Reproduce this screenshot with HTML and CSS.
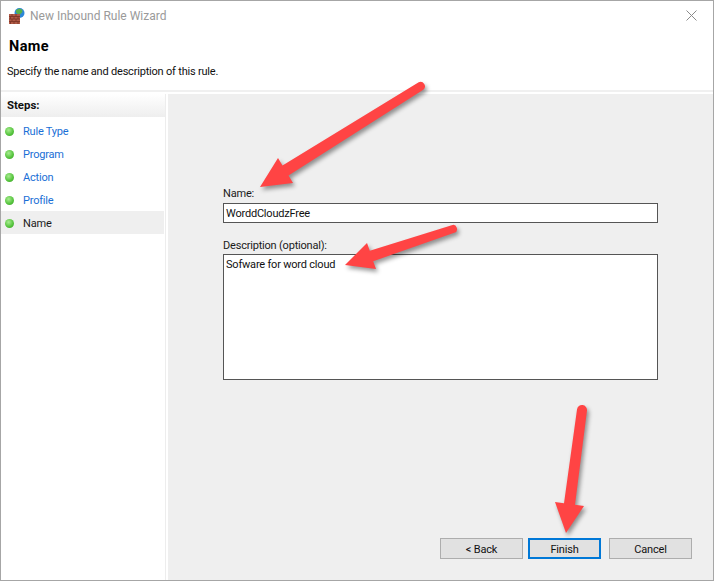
FILE: index.html
```html
<!DOCTYPE html>
<html lang="en">
<head>
<meta charset="utf-8">
<title>New Inbound Rule Wizard</title>
<link rel="stylesheet" href="styles.css">
</head>
<body>
<div class="window">
  <div class="titlebar">
    <svg class="app-icon" viewBox="0 0 16 16" width="16" height="16" aria-hidden="true">
      <circle cx="10.5" cy="5" r="5" fill="#2c86d8"/>
      <path d="M7 2.2 L10 .6 L13 1.6 L13.5 4 L11 6.5 L8.5 6 L6.8 4Z" fill="#58b04a"/>
      <rect x="0" y="6" width="11" height="10" fill="#b05a46"/>
      <path d="M0 8.5H11M0 11H11M0 13.5H11M3 6V8.5M7 6V8.5M1.5 8.5V11M5 8.5V11M9 8.5V11M3 11V13.5M7 11V13.5M1.5 13.5V16M5 13.5V16M9 13.5V16" stroke="#7a3225" stroke-width=".8" fill="none"/>
    </svg>
    <span class="title">New Inbound Rule Wizard</span>
    <svg class="close" viewBox="0 0 11 11" width="11" height="11" aria-hidden="true">
      <path d="M.5 .5L10.5 10.5M10.5 .5L.5 10.5" stroke="#8a8a8a" stroke-width="1" fill="none"/>
    </svg>
  </div>
  <div class="header">
    <h1 class="heading">Name</h1>
    <p class="sub">Specify the name and description of this rule.</p>
  </div>
  <div class="body">
    <aside class="steps">
      <div class="steps-head">Steps:</div>
      <ul class="step-list">
        <li class="step"><span class="dot"></span><span class="link">Rule Type</span></li>
        <li class="step"><span class="dot"></span><span class="link">Program</span></li>
        <li class="step"><span class="dot"></span><span class="link">Action</span></li>
        <li class="step"><span class="dot"></span><span class="link">Profile</span></li>
        <li class="step current"><span class="dot"></span><span>Name</span></li>
      </ul>
    </aside>
    <main class="content">
      <form class="form">
        <label class="label" for="n">Name:</label>
        <div class="field" id="n">WorddCloudzFree</div>
        <label class="label second" for="d">Description (optional):</label>
        <div class="field area" id="d">Sofware for word cloud</div>
      </form>
      <div class="buttons">
        <button class="btn back" type="button">&lt; Back</button>
        <button class="btn finish" type="button">Finish</button>
        <button class="btn cancel" type="button">Cancel</button>
      </div>
    </main>
  </div>
  <svg class="arrows" viewBox="0 0 714 581" width="714" height="581" aria-hidden="true">
    <g class="arrow">
      <path d="M418.7 82.2A4.5 4.5 0 0 1 423.3 89.8L288.5 175.5L293 183L260 187L278 158L282.5 165.5Z"/>
      <path d="M451.7 225.2A4 4 0 0 1 454.3 232.8L373.2 261.2L376 269L345 265L367 243L369.8 250.8Z"/>
      <path d="M577 409.4A5 5 0 0 1 587 410.6L575 504.7L584 506L566 533L555 502L564 503.3Z"/>
    </g>
  </svg>
</div>
</body>
</html>
```
FILE: styles.css
```css
* { box-sizing: border-box; }
html, body { margin: 0; padding: 0; background: #fff; }
.window {
  position: relative;
  width: 714px;
  height: 581px;
  display: flex;
  flex-direction: column;
  background: #fff;
  border: 1px solid #a6a6a6;
  font-family: Roboto, "Liberation Sans", sans-serif;
  font-size: 11px;
  letter-spacing: -.2px;
  color: #1a1a1a;
  overflow: hidden;
}
.titlebar { height: 29px; display: flex; align-items: center; padding: 0 16px 0 8px; flex: none; }
.app-icon { width: 16px; height: 16px; margin-right: 5px; flex: none; }
.title { color: #9a9a9a; font-size: 12px; letter-spacing: 0; flex: 1; }
.close { flex: none; }
.header { height: 62px; flex: none; border-bottom: 2px solid #f0f0f0; padding: 9px 0 0 6px; }
.heading { margin: 0 0 0 2px; font-size: 14.5px; letter-spacing: .4px; font-weight: 700; line-height: 16px; color: #000; }
.sub { margin: 9px 0 0; line-height: 16px; color: #111; }
.body { flex: 1; display: flex; min-height: 0; padding-top: 2px; background: #fff; }
.steps { width: 165px; flex: none; border-right: 1px solid #ededed; }
.steps-head { height: 23px; padding: 3px 0 0 6px; font-size: 11.4px; letter-spacing: 0; font-weight: 700; line-height: 16px; color: #111; background: linear-gradient(#ffffff, #eeeeee); }
.step-list { list-style: none; margin: 2px 0 0; padding: 0; }
.step { height: 23px; display: flex; align-items: center; padding: 2px 0 0 4px; }
.step.current { background: #efefef; margin-right: 1px; }
.dot { width: 9px; height: 9px; border-radius: 50%; margin-right: 9px; background: radial-gradient(circle at 40% 35%, #a8ec90, #52c23a 60%, #3f9a2c); flex: none; }
.link { color: #1a6fd6; }
.content { flex: 1; margin-left: 2px; background: #efefef; display: flex; flex-direction: column; padding: 91px 19px 0 55px; }
.form { display: flex; flex-direction: column; width: 435px; flex: none; }
.label { line-height: 18px; height: 15px; margin-bottom: 3px; color: #1a1a1a; }
.second { margin-top: 14px; height: 16px; margin-bottom: 1px; }
.field { height: 20px; border: 1px solid #555; background: #fff; padding: 2px 2px 0; line-height: 16px; color: #111; }
.area { height: 126px; }
.buttons { margin-top: 158px; display: flex; padding-left: 217px; }
.btn { height: 21px; width: 83px; border: 1px solid #adadad; background: #e1e1e1; font: inherit; letter-spacing: inherit; color: #111; padding: 2px 0 0; }
.finish { width: 73px; margin: 0 8px 0 5px; border: 2px solid #0078d7; }
.arrows { position: absolute; left: -1px; top: -1px; pointer-events: none; }
.arrow { fill: #ff4444; filter: drop-shadow(2px 3px 2px rgba(0,0,0,.4)); }
```
